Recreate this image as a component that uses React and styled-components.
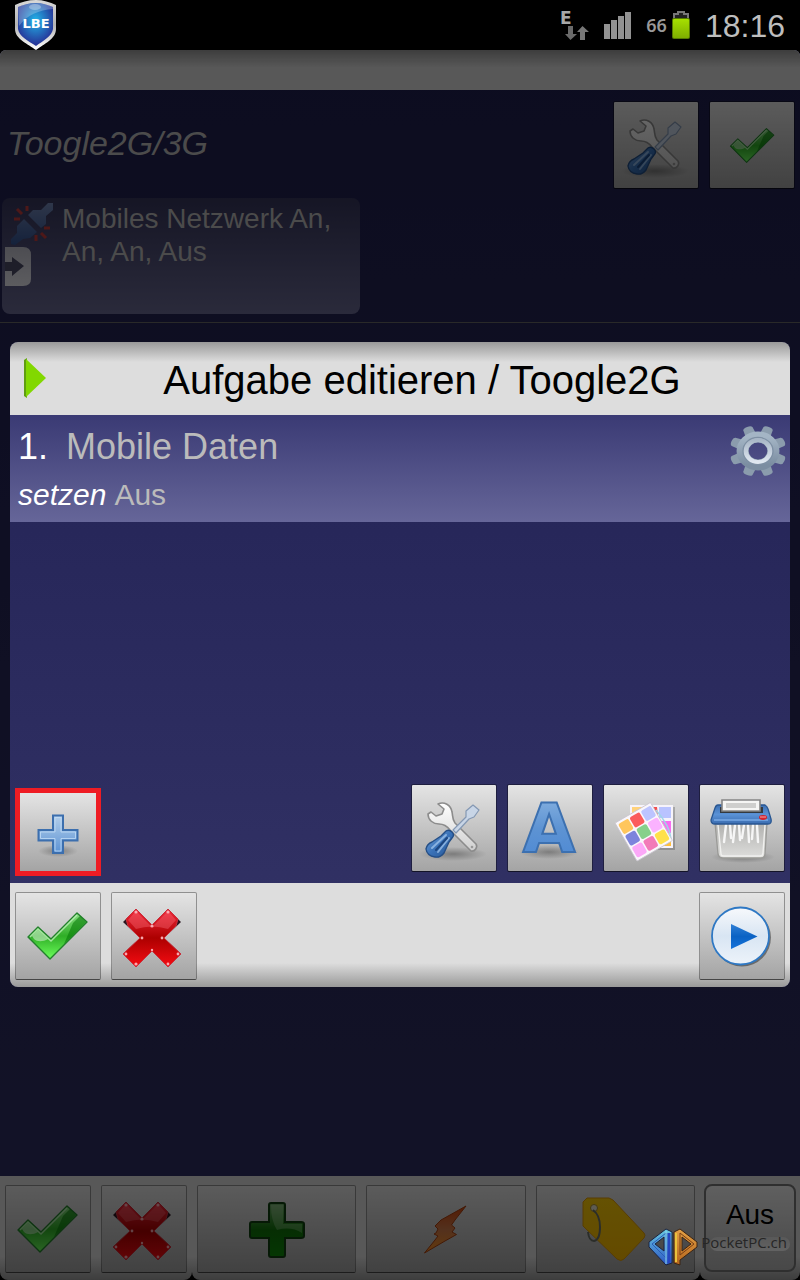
import { createGlobalStyle, styled } from "styled-components";

const App = () => {
  return (
    <Screen>
      <GlobalStyle />
      <StatusBar>
        <ShieldIcon />
        <StatusIcons>
          <NetworkIcon />
          <SignalIcon />
          <Battery>
            66
            <BatteryIcon />
          </Battery>
          <Clock>18:16</Clock>
        </StatusIcons>
      </StatusBar>

      <Window>
        <TitleBar />
        <ProfileHeader>
          <ProfileName>Toogle2G/3G</ProfileName>
          <ButtonGroup>
            <IconButton type="button" aria-label="Einstellungen">
              <ToolsIcon />
            </IconButton>
            <IconButton type="button" aria-label="Fertig">
              <CheckIcon size={47} />
            </IconButton>
          </ButtonGroup>
        </ProfileHeader>
        <ContextList>
          <ContextCard>
            <CardIcons>
              <PlugIcon />
              <EnterIcon />
            </CardIcons>
            <CardText>Mobiles Netzwerk An, An, An, Aus</CardText>
          </ContextCard>
        </ContextList>
        <PageBody />
        <BottomBar>
          <BarGroup>
            <IconButton type="button" aria-label="OK">
              <CheckIcon />
            </IconButton>
            <IconButton type="button" aria-label="Abbrechen">
              <CrossIcon />
            </IconButton>
          </BarGroup>
          <BarGroup $grow>
            <IconButton $grow type="button" aria-label="Neu">
              <GreenPlusIcon />
            </IconButton>
            <IconButton $grow type="button" aria-label="Aufgaben">
              <BoltIcon />
            </IconButton>
            <IconButton $grow type="button" aria-label="Variablen">
              <TagIcon />
            </IconButton>
          </BarGroup>
          <BarGroup $narrow>
            <Toggle type="button" aria-pressed="false">
              Aus
              <ToggleLight />
            </Toggle>
          </BarGroup>
        </BottomBar>

        <Scrim>
          <Dialog role="dialog" aria-labelledby="dialog-title">
            <DialogHeader>
              <ArrowIcon />
              <DialogTitle id="dialog-title">
                Aufgabe editieren / Toogle2G
              </DialogTitle>
            </DialogHeader>
            <Actions>
              <Action>
                <ActionText>
                  <ActionName>
                    <b>1.</b>
                    <span>Mobile Daten</span>
                  </ActionName>
                  <ActionDetail>
                    <em>setzen</em>
                    <span>Aus</span>
                  </ActionDetail>
                </ActionText>
                <GearIcon />
              </Action>
            </Actions>
            <Toolbar>
              <AddButton type="button" aria-label="Hinzufügen">
                <BluePlusIcon />
              </AddButton>
              <ButtonGroup>
                <IconButton type="button" aria-label="Werkzeuge">
                  <ToolsIcon />
                </IconButton>
                <IconButton type="button" aria-label="Umbenennen">
                  <LetterIcon />
                </IconButton>
                <IconButton type="button" aria-label="Symbol">
                  <SwatchesIcon />
                </IconButton>
                <IconButton type="button" aria-label="Löschen">
                  <ShredderIcon />
                </IconButton>
              </ButtonGroup>
            </Toolbar>
            <DialogFooter>
              <ButtonGroup>
                <IconButton type="button" aria-label="OK">
                  <CheckIcon />
                </IconButton>
                <IconButton type="button" aria-label="Abbrechen">
                  <CrossIcon />
                </IconButton>
              </ButtonGroup>
              <IconButton type="button" aria-label="Abspielen">
                <PlayIcon />
              </IconButton>
            </DialogFooter>
          </Dialog>
        </Scrim>

        <Watermark>
          <PocketLogo />
          <span>PocketPC.ch</span>
        </Watermark>
      </Window>
    </Screen>
  );
};

export default App;

const Icon = ({ size = 64, children }) => (
  <svg width={size} height={size} viewBox="0 0 64 64" aria-hidden="true">
    {children}
  </svg>
);

const Shade = ({ id, from, to, mid, x2 = 0, y2 = 1 }) => (
  <linearGradient id={id} x1="0" y1="0" x2={x2} y2={y2}>
    <stop offset="0" stopColor={from} />
    {mid && <stop offset="0.5" stopColor={mid} />}
    <stop offset="1" stopColor={to} />
  </linearGradient>
);

const GroundShadow = ({ id, cx, cy, rx, ry }) => (
  <>
    <radialGradient id={id}>
      <stop offset="0" stopColor="#000" stopOpacity="0.3" />
      <stop offset="1" stopColor="#000" stopOpacity="0" />
    </radialGradient>
    <ellipse cx={cx} cy={cy} rx={rx} ry={ry} fill={`url(#${id})`} />
  </>
);

const CheckIcon = ({ size }) => (
  <Icon size={size}>
    <defs>
      <Shade id="check" from="#8ade84" mid="#2fae26" to="#6dff5c" />
    </defs>
    <path
      d="M2 33 12 23 25 35 51 9 61 18 24 55Z"
      fill="url(#check)"
      stroke="#23802c"
      strokeWidth="1.4"
      strokeLinejoin="round"
    />
    <path d="M47 19 54 12 60 18 38 40Z" fill="#087d08" opacity="0.6" />
    <path d="M4 33 12 25 25 37 51 11" fill="none" stroke="#c6f5c0" strokeWidth="1.5" opacity="0.75" />
    <path d="M6 32 12 26 22 35 C17 38 11 38 8 35Z" fill="#fff" opacity="0.45" />
  </Icon>
);

const CrossIcon = () => (
  <Icon>
    <defs>
      <Shade id="cross" from="#f0283a" mid="#ac0000" to="#f60c12" />
    </defs>
    <path
      d="M14 5 30 21 46 5 59 18 42 34 59 50 46 63 30 47 14 63 1 50 18 34 1 18Z"
      fill="#2b1620"
    />
    <path
      d="M14 5 30 21 46 5 56 15 54 22 42 34 59 50 46 63 30 47 14 63 1 50 18 34 6 22 4 15Z"
      fill="url(#cross)"
      stroke="#c8303c"
      strokeLinejoin="round"
    />
    <path d="M14 7 30 23 46 7 54 16 46 25Q30 20 14 25L6 16Z" fill="#ff7885" opacity="0.35" />
    <g fill="#ffb8c0" opacity="0.9">
      <circle cx="14" cy="8" r="1.6" />
      <circle cx="46" cy="8" r="1.6" />
      <circle cx="30" cy="22" r="1.6" />
      <circle cx="20" cy="34" r="1.4" />
      <circle cx="40" cy="34" r="1.4" />
      <circle cx="30" cy="46" r="1.2" />
      <circle cx="4" cy="50" r="1.4" />
      <circle cx="56" cy="50" r="1.4" />
      <circle cx="14" cy="60" r="1.6" />
      <circle cx="46" cy="60" r="1.4" />
    </g>
  </Icon>
);

const GreenPlusIcon = () => (
  <Icon>
    <defs>
      <Shade id="greenPlus" from="#6fa868" mid="#0f7209" to="#0d8a08" />
    </defs>
    <path
      d="M26 6H38Q40 6 40 8V25H56Q59 25 59 27V39Q59 41 56 41H40V58Q40 60 38 60H26Q24 60 24 58V41H7Q5 41 5 39V27Q5 25 7 25H24V8Q24 6 26 6Z"
      fill="url(#greenPlus)"
      stroke="#10400f"
      strokeWidth="2"
    />
    <path d="M26 8H38V27H57V36Q46 29 32 33 26 24 26 8Z" fill="#c5e8bd" opacity="0.3" />
  </Icon>
);

const BluePlusIcon = () => (
  <Icon>
    <defs>
      <Shade id="bluePlus" from="#b4cfea" to="#5b92d4" />
    </defs>
    <GroundShadow id="plusShadow" cx="32" cy="51" rx="20" ry="6" />
    <path
      d="M27 15.5H37V30H51.5V40.5H37V53H27V40.5H12.5V30H27Z"
      fill="url(#bluePlus)"
      stroke="#3c6fae"
      strokeWidth="2"
    />
    <path d="M29 17.5H35V32H49.5V38.5H35V51H29V38.5H14.5V32H29Z" fill="none" stroke="#c2dcf5" opacity="0.8" />
  </Icon>
);

const ToolsIcon = () => (
  <Icon>
    <defs>
      <Shade id="wrench" from="#ffffff" to="#cfcfcf" />
      <Shade id="handle" from="#7aaae0" mid="#3a72b8" to="#265592" x2={1} />
    </defs>
    <GroundShadow id="toolsShadow" cx="31" cy="58" rx="34" ry="7" />
    <path
      d="M16 8C22 5 29 9 30 16C31 20 30 23 33 27L54 48C56 51 53 56 49 55L28 34C25 30 22 28 17 28C11 28 6 24 6 18L9 16 14 20 20 18 22 13Z"
      fill="url(#wrench)"
      stroke="#8c8c8c"
      strokeWidth="1.6"
      strokeLinejoin="round"
    />
    <circle cx="50" cy="51" r="1.3" fill="#999" />
    <path
      d="M31 34 44 21 44 15 51 9 57 14 52 21 47 23 34 37Z"
      fill="#c8d5e6"
      stroke="#8498b3"
      strokeWidth="1.2"
      strokeLinejoin="round"
    />
    <path
      d="M24 35Q27 33 30 36Q33 39 30 42L27 46 22 57Q18 62 13 61Q5 60 4 53Q5 48 10 46L19 40Z"
      fill="url(#handle)"
      stroke="#244e86"
      strokeWidth="1.4"
    />
    <path d="M24 39 10 52M27 42 16 56" stroke="#a8cbf0" strokeWidth="2" strokeLinecap="round" opacity="0.7" />
    <path d="M25 42 14 54" stroke="#1c4680" strokeWidth="2" strokeLinecap="round" />
  </Icon>
);

const LetterIcon = () => (
  <Icon>
    <defs>
      <Shade id="letter" from="#8db6e2" mid="#5d93d3" to="#4a87d4" />
    </defs>
    <GroundShadow id="letterShadow" cx="31" cy="56" rx="30" ry="7" />
    <LetterText x="31" y="56">
      A
    </LetterText>
  </Icon>
);

const swatches = [
  ["#ffc65c", "#fb5c5c", "#bcc4ff"],
  ["#7c84dc", "#86d08a", "#fbb2ff"],
  ["#fca8f8", "#f27ab8", "#ffe14a"],
];

const SwatchesIcon = () => (
  <Icon>
    <path d="M18 11H61V54H18Z" fill="#000" opacity="0.2" />
    <path d="M16 9H59V52H16Z" fill="#f6f3fa" />
    <path d="M45 11H57V22H45Z" fill="#b9c3ff" />
    <path d="M45 25H57V37H45Z" fill="#f86df0" />
    <path d="M45 39H57V50H45Z" fill="#ffbf3c" />
    <path d="M18 11H29V20H18Z" fill="#ffd27a" />
    <path d="M39 11 43 11 44 20Z" fill="#f34f4f" />
    <path d="M42 14Q56 30 57 43L52 48" fill="none" stroke="#9fd5e8" strokeWidth="1.5" />
    <g transform="translate(1 27) rotate(-30)">
      <rect width="41" height="44" rx="1" fill="#faf7fb" stroke="#c9c5cf" strokeWidth="0.8" />
      {swatches.map((row, y) =>
        row.map((color, x) => (
          <rect
            key={color}
            x={2 + x * 13}
            y={2.5 + y * 13.5}
            width="11.5"
            height="12"
            rx="2"
            fill={color}
          />
        ))
      )}
    </g>
  </Icon>
);

const ShredderIcon = () => (
  <Icon>
    <defs>
      <Shade id="lid" from="#3c70b4" mid="#5a92d6" to="#3a6cb0" />
      <Shade id="bin" from="#b0b0ae" to="#dededc" />
    </defs>
    <GroundShadow id="binShadow" cx="33" cy="61" rx="32" ry="6" />
    <path
      d="M5 27H57L55 58Q55 62 51 62H13Q9 62 8 58Z"
      fill="url(#bin)"
      stroke="#9a9a97"
      strokeWidth="1.3"
    />
    <path d="M8 29 11 58Q11 60 14 60H50Q53 60 53 57L55 29" fill="none" stroke="#f0f0ee" strokeWidth="1.4" />
    <path
      d="M16 29 14 46M20 29 21 42M25 29 23 46M29 29 30 44M34 29 32 42M38 29 39 46M43 29 42 43M47 29 48 46"
      fill="none"
      stroke="#f6f6f6"
      strokeWidth="2.4"
      strokeLinecap="round"
    />
    <path
      d="M8 9H55Q57 10 58 13L61 23Q62 28 58 28H5Q1 28 1 24L5 12Q6 9 8 9Z"
      fill="url(#lid)"
      stroke="#285691"
      strokeWidth="1.3"
    />
    <path d="M10 11H53V17H10Z" fill="#33393f" />
    <path d="M12 4H50V15H12Z" fill="#f6f6f4" stroke="#858585" strokeWidth="1.6" />
    <path d="M16 7H46V12H16Z" fill="#cfcfcd" />
    <path d="M4 24H58" stroke="#79aae4" strokeWidth="1.5" />
    <ellipse cx="53" cy="21.5" rx="4" ry="2.4" fill="#d4222c" />
    <path d="M50 21H56" stroke="#f6a5aa" strokeWidth="1" />
  </Icon>
);

const PlayIcon = () => (
  <Icon>
    <defs>
      <Shade id="disc" from="#f7f9fc" mid="#d8e5f3" to="#edf3fa" />
      <Shade id="discArrow" from="#2f7fd6" mid="#0a62c4" to="#1673da" />
    </defs>
    <circle cx="32" cy="33.5" r="29" fill="#000" opacity="0.4" />
    <circle cx="30.5" cy="32" r="28.5" fill="url(#disc)" stroke="#2e78c4" strokeWidth="1.8" />
    <path d="M21 20 47.5 32.5 21 45Z" fill="url(#discArrow)" />
  </Icon>
);

const BoltIcon = () => (
  <Icon>
    <defs>
      <Shade id="bolt" from="#d0460c" mid="#d07a4a" to="#f89020" />
    </defs>
    <path
      d="M52 9 27 23 21 29 24 32 22 36 20 37 24 39 21 43 10.5 56 31 44 42.5 37.5 38 35 41 31 37.5 28 41 23Z"
      fill="url(#bolt)"
      stroke="#a84010"
      strokeLinejoin="round"
    />
  </Icon>
);

const TagIcon = () => (
  <Icon>
    <defs>
      <Shade id="tag" from="#fccc08" to="#f8b800" />
    </defs>
    <path
      d="M4 1H26L30 3 61 36Q63 38 61 41L41 62Q38 65 34 62L0 29V5Z"
      fill="url(#tag)"
      stroke="#dd9808"
    />
    <circle cx="11" cy="11" r="3.5" fill="#e8e4d0" stroke="#a88c28" />
    <path
      d="M10 13Q17 18 17 30Q17 43 11 44Q6 44 5 35"
      fill="none"
      stroke="#6b7168"
      strokeWidth="2"
    />
  </Icon>
);

const ArrowIcon = () => (
  <svg width="30" height="40" viewBox="0 0 30 40" aria-hidden="true">
    <path d="M0 2 3 0V40L0 38Z" fill="#5f9e10" />
    <path d="M2 1 22 20 2 39Z" fill="#82d800" />
  </svg>
);

const GearIcon = () => (
  <svg width="58" height="52" viewBox="0 0 58 52" aria-hidden="true">
    <defs>
      <Shade id="gear" from="#a4b5c5" to="#7b8da1" />
      <Shade id="gearRing" from="#a9b7c7" to="#dfe7f0" />
    </defs>
    <g transform="translate(29 26) scale(1.1 1)">
      {[0, 1, 2, 3, 4, 5, 6, 7].map((n) => (
        <path
          key={n}
          d="M-5 -17 -4.5 -24Q-4 -26 0 -26Q4 -26 4.5 -24L5 -17Z"
          fill="#8b9cad"
          transform={`rotate(${22.5 + n * 45})`}
        />
      ))}
      <circle r="14" fill="none" stroke="url(#gear)" strokeWidth="11" />
      <circle r="13.5" fill="none" stroke="#7e90a4" strokeWidth="1.5" />
      <circle r="11" fill="none" stroke="url(#gearRing)" strokeWidth="4" />
    </g>
  </svg>
);

const PlugIcon = () => (
  <svg width="44" height="44" viewBox="0 0 44 44" aria-hidden="true">
    <defs>
      <Shade id="plug" from="#7488b8" to="#345494" />
    </defs>
    <path
      d="M43 1V8L36 14V22L31 26 18 13 23 8H31L38 1Z M14 17 27 30 20 36 13 37 5 43 1 42V37L7 31V24Z"
      fill="url(#plug)"
    />
    <path
      d="M17 4V9M7 7 12 12M4 17H10M34 26H40M31 31 36 36M26 33V39"
      stroke="#c03c3c"
      strokeWidth="3"
    />
  </svg>
);

const EnterIcon = () => (
  <svg width="28" height="40" viewBox="0 0 28 40" aria-hidden="true">
    <defs>
      <Shade id="enter" from="#c0c0cc" to="#e6e6ee" />
    </defs>
    <path d="M0 0H18Q26 0 26 8V32Q26 39 18 39H0Z" fill="url(#enter)" />
    <path d="M0 15H7V10L19 19 7 29V24H0Z" fill="#4c4c68" />
  </svg>
);

const ShieldIcon = () => (
  <svg width="44" height="50" viewBox="0 0 44 50" role="img" aria-label="LBE">
    <defs>
      <Shade id="rim" from="#d8d8d8" mid="#b4b4b4" to="#ffffff" />
      <radialGradient id="shield" cx="0.5" cy="0.4" r="0.55">
        <stop offset="0" stopColor="#22b4e8" />
        <stop offset="1" stopColor="#26379a" />
      </radialGradient>
    </defs>
    <path d="M22 0C29 0 36 2 42 5V29C42 39 30 44 22 50C14 44 1 39 1 29V5C7 2 14 0 22 0Z" fill="url(#rim)" />
    <path d="M22 3C28 3 34 5 39 7V29C38 36 29 41 22 46C14 41 5 36 4 29V7C9 5 15 3 22 3Z" fill="url(#shield)" />
    <path d="M4 7C15 2 29 2 39 7V9C25 10 13 15 5 26Z" fill="#fff" opacity="0.25" />
    <ellipse cx="21" cy="7" rx="6" ry="3" fill="#fff" opacity="0.3" />
    <ShieldText x="22" y="28">
      LBE
    </ShieldText>
  </svg>
);

const NetworkIcon = () => (
  <svg width="30" height="32" viewBox="0 0 30 32" role="img" aria-label="E">
    <NetworkText x="0" y="15">
      E
    </NetworkText>
    <path d="M8 17H13V25H17L10.5 31 5 25H8Z" fill="#6a6a6a" />
    <path d="M20 31V23H17L22.5 17 29 23H25V31Z" fill="#777" />
  </svg>
);

const SignalIcon = () => (
  <svg width="28" height="28" viewBox="0 0 28 28" aria-hidden="true">
    <path d="M0 13H6V28H0ZM7 9H13V28H7ZM14 5H20V28H14ZM21 1H27V28H21Z" fill="#929292" />
  </svg>
);

const BatteryIcon = () => (
  <svg width="20" height="30" viewBox="0 0 20 30" aria-hidden="true">
    <defs>
      <Shade id="charge" from="#a6e000" to="#7fae00" />
    </defs>
    <path d="M3 9V4H7V2H13V4H17V9" fill="#222" stroke="#777" strokeWidth="2" />
    <rect x="1" y="8" width="18" height="21" rx="2" fill="#557a00" />
    <rect x="2" y="9" width="16" height="19" rx="1" fill="url(#charge)" />
  </svg>
);

const PocketLogo = () => (
  <svg width="48" height="37" viewBox="0 0 48 37" aria-hidden="true">
    <defs>
      <Shade id="blueP" from="#69c9e0" to="#2b56c4" />
      <Shade id="orangeP" from="#e3a145" to="#b4641c" />
    </defs>
    <path
      d="M0 13 17 0 23 3V34L17 36 0 18ZM6 15 15 22V8Z"
      fill="url(#blueP)"
      fillRule="evenodd"
      stroke="#1c2440"
    />
    <path
      d="M48 13 31 0 25 3V34L31 36V31L48 18ZM42 15 33 22V8Z"
      fill="url(#orangeP)"
      fillRule="evenodd"
      stroke="#3a2414"
    />
    <path d="M3 15 17 4V29Z" fill="none" stroke="#2a5cb8" />
    <path d="M17 2V35" stroke="#8fdcf0" />
    <path d="M20 4V34" stroke="#2646c0" strokeWidth="3" />
    <path d="M45 15 31 4V26Z" fill="none" stroke="#7a3e14" />
    <path d="M27 4V33" stroke="#e8c23c" strokeWidth="2" />
  </svg>
);

const GlobalStyle = createGlobalStyle`
  * {
    box-sizing: border-box;
  }

  body {
    margin: 0;
    background-color: #000;
    font-family: "Liberation Sans", Arial, sans-serif;
  }

  svg {
    display: block;
    flex-shrink: 0;
    overflow: visible;
  }
`;

const Screen = styled.div`
  display: flex;
  flex-direction: column;
  min-height: 100vh;
`;

const StatusBar = styled.div`
  height: 50px;
  padding: 0 15px 0 14px;
  display: flex;
  align-items: center;
  justify-content: space-between;
  background-color: #000;
`;

const StatusIcons = styled.div`
  display: flex;
  align-items: center;
  gap: 14px;
`;

const Battery = styled.div`
  display: flex;
  align-items: center;
  gap: 4px;
  color: #999;
  font-family: "Noto Sans", sans-serif;
  font-size: 18px;
  font-weight: 600;
`;

const Clock = styled.div`
  padding-top: 2px;
  color: #bebebe;
  font-size: 32px;
  line-height: 36px;
`;

const NetworkText = styled.text`
  fill: #a8a8a8;
  font-family: "DejaVu Sans", sans-serif;
  font-size: 17px;
  font-weight: bold;
`;

const ShieldText = styled.text`
  fill: #fff;
  font-family: "DejaVu Sans", sans-serif;
  font-size: 13px;
  font-weight: bold;
  text-anchor: middle;
`;

const LetterText = styled.text`
  fill: url(#letter);
  stroke: #3c70b0;
  stroke-width: 2px;
  font-family: "DejaVu Sans", sans-serif;
  font-size: 68px;
  font-weight: bold;
  text-anchor: middle;
`;

const Window = styled.div`
  position: relative;
  flex: 1;
  display: flex;
  flex-direction: column;
  border-radius: 6px 6px 0 0;
  overflow: hidden;
  background: linear-gradient(#202050, #303064);
`;

const TitleBar = styled.div`
  height: 40px;
  background: linear-gradient(#999, #ddd 18px);
`;

const ProfileHeader = styled.div`
  padding: 11px 5px 9px 7px;
  display: flex;
  align-items: center;
  justify-content: space-between;
`;

const ProfileName = styled.h1`
  margin: 0;
  padding-bottom: 4px;
  color: #bbb;
  font-size: 34px;
  font-style: italic;
  font-weight: normal;
`;

const ButtonGroup = styled.div`
  display: flex;
  gap: 10px;
`;

const IconButton = styled.button`
  width: 86px;
  height: 88px;
  padding: 0;
  flex: ${({ $grow }) => ($grow ? "1" : "none")};
  display: flex;
  align-items: center;
  justify-content: center;
  border: 1px solid rgba(0, 0, 0, 0.35);
  border-bottom-color: rgba(0, 0, 0, 0.6);
  border-radius: 2px;
  background: linear-gradient(#e4e4e4, #a4a4a4) padding-box;
  cursor: pointer;
`;

const AddButton = styled(IconButton)`
  align-self: flex-end;
  border: 5px solid #ee1c24;
  border-radius: 0;
`;

const ContextList = styled.div`
  padding: 0 2px 8px;
  border-bottom: 1px solid #666;
`;

const ContextCard = styled.div`
  width: 45%;
  min-height: 116px;
  padding: 4px 3px;
  display: flex;
  gap: 8px;
  border-radius: 8px;
  background: linear-gradient(#36365c, #6a6a94);
`;

const CardIcons = styled.div`
  width: 49px;
  display: flex;
  flex-direction: column;
  gap: 1px;

  svg:first-child {
    align-self: flex-end;
  }
`;

const CardText = styled.div`
  flex: 1;
  color: #bbb;
  font-size: 28px;
  line-height: 33px;
`;

const PageBody = styled.div`
  flex: 1;
`;

const BottomBar = styled.div`
  display: flex;
  background-color: #000;
`;

const BarGroup = styled.div`
  flex: ${({ $grow }) => ($grow ? "1" : "none")};
  padding: ${({ $narrow }) => ($narrow ? "8px 4px" : "9px 5px 7px")};
  display: flex;
  gap: 10px;
  border-radius: 0 0 8px 8px;
  background: linear-gradient(#ddd calc(100% - 24px), #999);
`;

const Toggle = styled.button`
  width: 92px;
  height: 88px;
  padding: 13px 4px 0;
  display: flex;
  flex-direction: column;
  align-items: center;
  gap: 6px;
  border: 2px solid #777;
  border-radius: 8px;
  background: linear-gradient(#eee, #b4b4b4);
  color: #000;
  font-family: inherit;
  font-size: 28px;
  line-height: 32px;
`;

const ToggleLight = styled.span`
  width: 100%;
  height: 14px;
  border-radius: 7px;
  background: linear-gradient(#ddd, #f6f6f6);
`;

const Scrim = styled.div`
  position: absolute;
  inset: 0;
  padding: 0 10px 2px;
  display: flex;
  align-items: center;
  background-color: rgba(0, 0, 0, 0.6);
`;

const Dialog = styled.section`
  width: 100%;
  border-radius: 8px;
  overflow: hidden;
  background: linear-gradient(#222255, #333366);
`;

const DialogHeader = styled.div`
  height: 73px;
  padding-left: 14px;
  display: flex;
  align-items: center;
  background: linear-gradient(#999, #ddd 20px);
`;

const DialogTitle = styled.h2`
  flex: 1;
  margin: 0;
  padding-top: 4px;
  color: #000;
  font-size: 40px;
  font-weight: normal;
  text-align: center;
`;

const Actions = styled.div`
  min-height: 369px;
`;

const Action = styled.div`
  height: 107px;
  padding: 10px 3px 0 8px;
  display: flex;
  align-items: flex-start;
  justify-content: space-between;
  background: linear-gradient(#3a3a74, #666699);
`;

const ActionText = styled.div`
  display: flex;
  flex-direction: column;
  gap: 6px;
  color: #bbb;
`;

const ActionName = styled.div`
  display: flex;
  gap: 18px;
  font-size: 36px;
  line-height: 44px;

  b {
    color: #fff;
    font-weight: normal;
  }
`;

const ActionDetail = styled.div`
  display: flex;
  gap: 8px;
  font-size: 30px;
  line-height: 40px;

  em {
    color: #fff;
  }
`;

const Toolbar = styled.div`
  min-height: 99px;
  padding: 0 5px 7px;
  display: flex;
  align-items: flex-start;
  justify-content: space-between;
`;

const DialogFooter = styled.div`
  padding: 9px 5px 7px;
  display: flex;
  justify-content: space-between;
  background: linear-gradient(#ddd calc(100% - 24px), #999);
`;

const Watermark = styled.div`
  position: absolute;
  right: 13px;
  bottom: 14px;
  display: flex;
  align-items: flex-start;
  gap: 4px;
  color: #262626;
  font-family: "Open Sans", sans-serif;
  font-size: 15px;
  line-height: 26px;
`;
